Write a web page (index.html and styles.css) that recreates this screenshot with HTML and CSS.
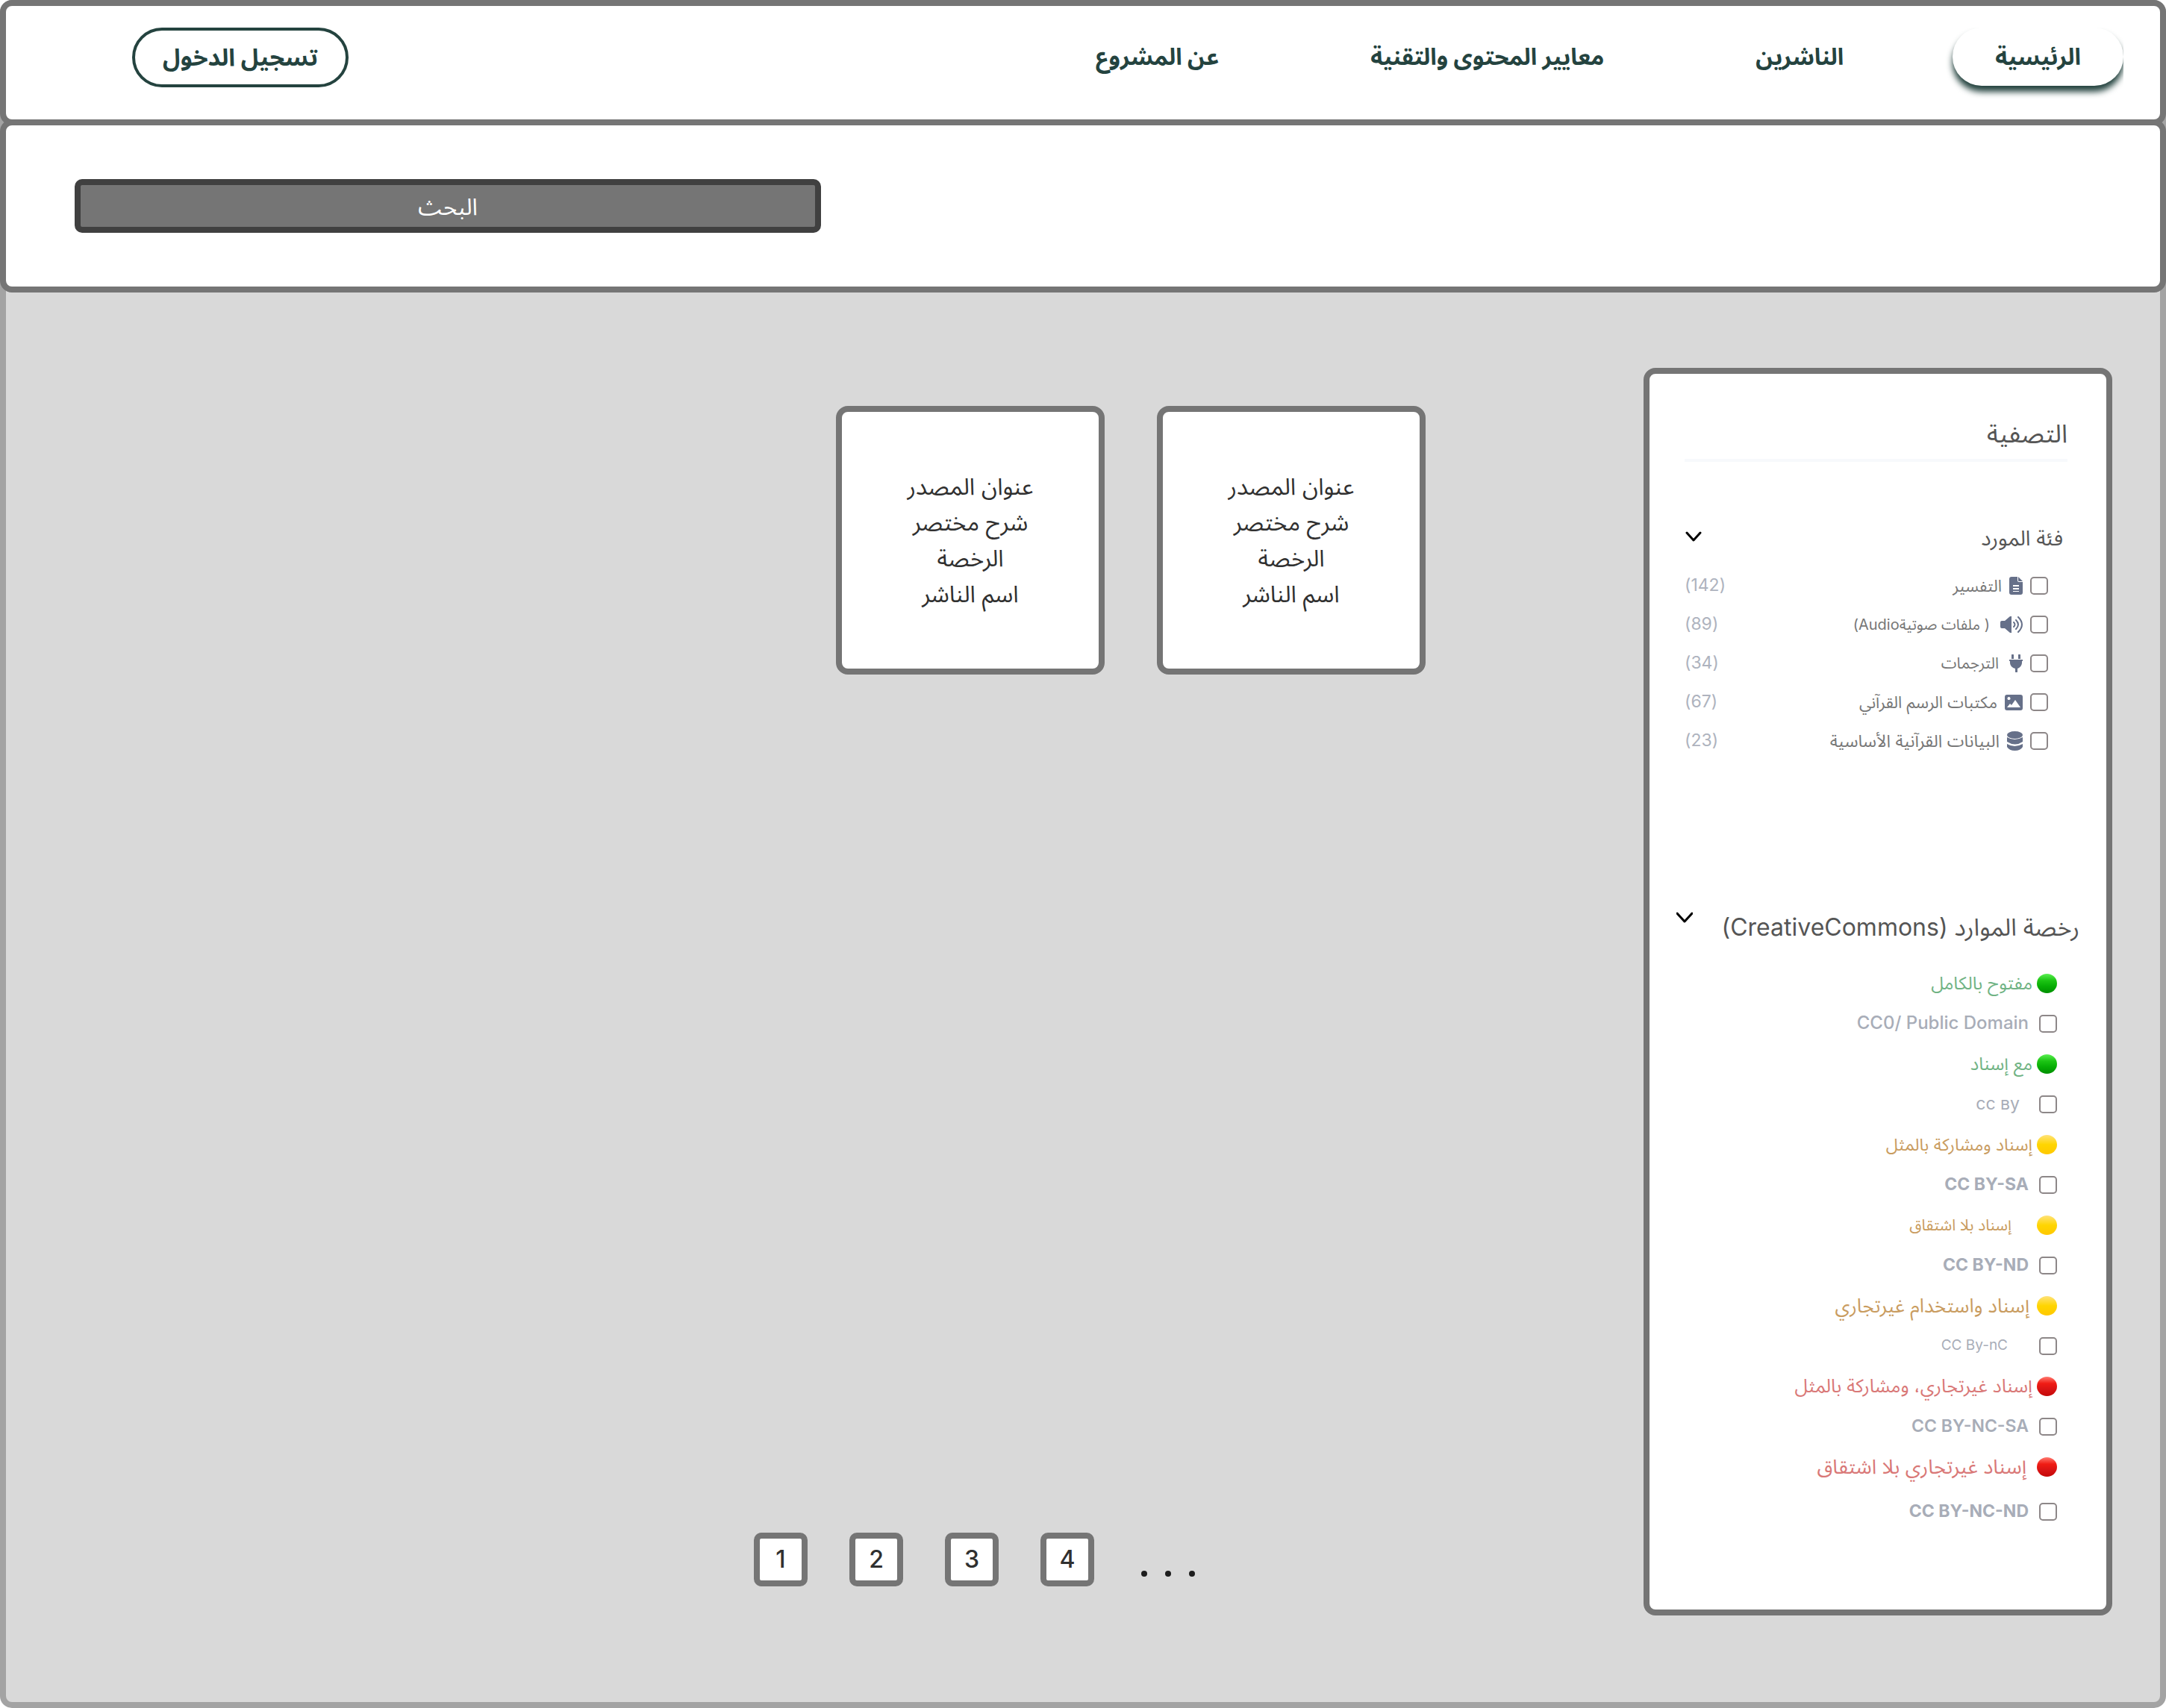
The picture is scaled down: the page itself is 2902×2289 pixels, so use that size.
FILE: index.html
```html
<!DOCTYPE html>
<html lang="ar" dir="rtl">
<head>
<meta charset="utf-8">
<meta name="viewport" content="width=device-width, initial-scale=1">
<title>الموارد</title>
<link rel="stylesheet" href="styles.css">
</head>
<body>
<div class="page">
  <header class="bar topbar">
    <nav class="nav">
      <a class="nav-link active" href="#">الرئيسية</a>
      <a class="nav-link" href="#">الناشرين</a>
      <a class="nav-link" href="#">معايير المحتوى والتقنية</a>
      <a class="nav-link" href="#">عن المشروع</a>
    </nav>
    <button class="login" type="button">تسجيل الدخول</button>
  </header>

  <form class="bar searchbar" role="search">
    <input class="search" type="search" placeholder="البحث" aria-label="البحث">
  </form>

  <main class="main">
    <aside class="filters">
      <h2 class="filters-title">التصفية</h2>

      <section class="group">
        <div class="group-head">
          <h3>فئة المورد</h3>
          <button class="toggle" type="button" aria-label="طي فئة المورد"><svg width="22" height="16" viewBox="0 0 22 16"><path d="M2 3l9 10 9-10"/></svg></button>
        </div>
        <ul class="categories">
          <li>
            <label><input type="checkbox"><svg class="icon" width="18" height="24" viewBox="0 0 18 24"><path fill-rule="evenodd" d="M3 0h8v5a2 2 0 0 0 2 2h5v14a3 3 0 0 1-3 3H3a3 3 0 0 1-3-3V3a3 3 0 0 1 3-3zm2 11v2h8v-2zm0 4v2h8v-2zm0 4v1h8v-1z"/><path d="M12 0l6 6h-5a1 1 0 0 1-1-1z"/></svg><span>التفسير</span></label>
            <span class="count">(142)</span>
          </li>
          <li class="spaced compact">
            <label><input type="checkbox"><svg class="icon" width="30" height="22" viewBox="0 0 30 22"><path d="M2 6h4l7-6a1 1 0 0 1 2 1v20a1 1 0 0 1-2 1l-7-6H2a2 2 0 0 1-2-2V8a2 2 0 0 1 2-2z"/><path class="wave" d="M18 8q3 3 0 6M21 5q6 6 0 12M24 1q10 10 0 20"/></svg><span>( ملفات صوتيةAudio)</span></label>
            <span class="count">(89)</span>
          </li>
          <li class="spaced">
            <label><input type="checkbox"><svg class="icon" width="18" height="24" viewBox="0 0 18 24"><path d="M3 1a1 1 0 0 1 3 0v5H3zM12 1a1 1 0 0 1 3 0v5h-3zM0 7h18v2h-1v2c0 4-3 7-6 8v4a1 1 0 0 1-3 0v-4c-4-1-7-4-7-8V9H0z"/></svg><span>الترجمات</span></label>
            <span class="count">(34)</span>
          </li>
          <li>
            <label><input type="checkbox"><svg class="icon" width="24" height="21" viewBox="0 0 24 21"><path fill-rule="evenodd" d="M3 0h18a3 3 0 0 1 3 3v15a3 3 0 0 1-3 3H3a3 3 0 0 1-3-3V3a3 3 0 0 1 3-3zm2 3a2 2 0 1 0 1 4 2 2 0 0 0-1-4zM3 17h18l-7-10-5 7-2-2z"/></svg><span>مكتبات الرسم القرآني</span></label>
            <span class="count">(67)</span>
          </li>
          <li class="roomy">
            <label><input type="checkbox"><svg class="icon" width="21" height="26" viewBox="0 0 21 26"><ellipse cx="10.5" cy="5" rx="10.5" ry="5"/><path d="M0 8q10 6 21 0v6q-10 7-21 0zM0 17q10 6 21 0v4q-3 5-10.500 5T0 21z"/></svg><span>البيانات القرآنية الأساسية</span></label>
            <span class="count">(23)</span>
          </li>
        </ul>
      </section>

      <section class="group licenses-group">
        <div class="group-head">
          <h3>رخصة الموارد (CreativeCommons)</h3>
          <button class="toggle" type="button" aria-label="طي رخصة الموارد"><svg width="22" height="16" viewBox="0 0 22 16"><path d="M1 2l10 11 10-11"/></svg></button>
        </div>
        <ul class="licenses">
          <li class="kind green"><i class="dot"></i><span>مفتوح بالكامل</span></li>
          <li><label><input type="checkbox"><span class="code medium">CC0/ Public Domain</span></label></li>
          <li class="kind green"><i class="dot"></i><span>مع إسناد</span></li>
          <li class="wide"><label><input type="checkbox"><span class="code">cc ʙy</span></label></li>
          <li class="kind yellow compact"><i class="dot"></i><span>إسناد ومشاركة بالمثل</span></li>
          <li><label><input type="checkbox"><span class="code bold">CC BY-SA</span></label></li>
          <li class="kind yellow wide small"><i class="dot"></i><span>إسناد بلا اشتقاق</span></li>
          <li><label><input type="checkbox"><span class="code bold">CC BY-ND</span></label></li>
          <li class="kind yellow large"><i class="dot"></i><span>إسناد واستخدام غيرتجاري</span></li>
          <li class="wide small"><label><input type="checkbox"><span class="code">CC By-nC</span></label></li>
          <li class="kind red roomy"><i class="dot"></i><span>إسناد غيرتجاري، ومشاركة بالمثل</span></li>
          <li><label><input type="checkbox"><span class="code semibold">CC BY-NC-SA</span></label></li>
          <li class="kind red xlarge"><i class="dot"></i><span>إسناد غيرتجاري بلا اشتقاق</span></li>
          <li><label><input type="checkbox"><span class="code bold">CC BY-NC-ND</span></label></li>
        </ul>
      </section>
    </aside>

    <div class="results">
      <div class="cards">
        <article class="card"><p>عنوان المصدر</p><p>شرح مختصر</p><p>الرخصة</p><p>اسم الناشر</p></article>
        <article class="card"><p>عنوان المصدر</p><p>شرح مختصر</p><p>الرخصة</p><p>اسم الناشر</p></article>
      </div>
      <nav class="pages" aria-label="الصفحات">
        <a href="#">1</a><a href="#">2</a><a href="#">3</a><a href="#">4</a>
        <span class="more" role="img" aria-label="المزيد"><i></i><i></i><i></i></span>
      </nav>
    </div>
  </main>
</div>
</body>
</html>
```
FILE: styles.css
```css
* { box-sizing: border-box; margin: 0; padding: 0; }

body {
  font-family: Inter, "Noto Sans Arabic", sans-serif;
  color: #303030;
  background: #fff;
}

a { color: inherit; text-decoration: none; }
ul { list-style: none; }
button, input { font: inherit; color: inherit; }

.page {
  display: flex;
  flex-direction: column;
  min-height: 100vh;
  border: 8px solid #a3a3a3;
  border-radius: 16px;
  background: #d9d9d9;
}

/* Top bars sit over the page frame and share one edge */
.bar {
  margin: -8px -8px 0;
  border: 8px solid #757575;
  border-radius: 16px;
  background: #fff;
}

.topbar {
  display: flex;
  justify-content: space-between;
  align-items: flex-start;
  height: 168px;
  padding: 29px 49px 0 169px;
}

.nav { display: flex; gap: 89px; }

.nav-link {
  padding: 0 57px;
  border-radius: 40px;
  font-size: 31px;
  font-weight: 700;
  line-height: 78px;
  color: #24433f;
}

.nav-link.active {
  background: #fff;
  box-shadow: 0 8px 8px #24433f;
  clip-path: inset(0 0 -20px -12px);
}

.login {
  width: 290px;
  height: 80px;
  border: 4px solid #24433f;
  border-radius: 40px;
  background: #fff;
  font-size: 32px;
  font-weight: 700;
  line-height: 70px;
  color: #24433f;
}

.searchbar {
  display: flex;
  justify-content: flex-end;
  height: 232px;
  padding: 72px 92px;
}

.search {
  appearance: none;
  width: 1000px;
  height: 72px;
  border: 8px solid #404040;
  border-radius: 10px;
  background: #757575;
  font-size: 31px;
  text-align: center;
  color: #fff;
}
.search::placeholder { color: #fff; opacity: 1; }
.search::-webkit-search-cancel-button { display: none; }

.main {
  flex: 1;
  display: flex;
  align-items: flex-start;
  padding: 101px 64px 116px;
}

/* Filter panel */
.filters {
  flex: none;
  width: 628px;
  padding-bottom: 98px;
  border: 8px solid #757575;
  border-radius: 16px;
  background: #fff;
}

.filters-title {
  margin: 50px 52px 0 47px;
  height: 68px;
  border-bottom: 4px solid #f7f9fc;
  font-size: 34px;
  font-weight: 400;
  line-height: 60px;
  color: #555;
}

.group { margin-top: 76px; }

.group-head {
  display: flex;
  justify-content: space-between;
  align-items: flex-start;
  height: 52px;
  padding: 0 58px 0 48px;
}

.group-head h3 {
  font-size: 28px;
  font-weight: 400;
  line-height: 52px;
  color: #555;
}

.toggle { display: flex; padding-top: 16px; border: 0; background: none; }
.toggle svg { fill: none; stroke: #000; stroke-width: 3; stroke-linecap: round; stroke-linejoin: round; }

.categories { margin-top: 12px; padding: 0 78px 0 47px; }

.categories li {
  display: flex;
  justify-content: space-between;
  align-items: center;
  height: 52px;
}

label { display: flex; align-items: center; gap: 10px; }

input[type="checkbox"] {
  appearance: none;
  width: 24px;
  height: 24px;
  border: 2px solid #8d8788;
  border-radius: 5px;
  background: #fff;
}

.icon { fill: #667089; }
.wave { fill: none; stroke: #667089; stroke-width: 2; stroke-linecap: round; }

.categories label span { font-size: 22px; line-height: 52px; color: #777; }
.categories .spaced label span { padding-right: 4px; font-size: 21px; }
.categories .compact label span { font-size: 20px; }
.categories .roomy label span { font-size: 23px; }
.count { padding-bottom: 2px; font-size: 23px; color: #aeb3be; }

.licenses-group { margin-top: 198px; }
.licenses-group .group-head { padding: 0 36px 0 36px; }
.licenses-group .group-head h3 { font-size: 32px; }
.licenses-group .toggle { padding-top: 5px; }

.licenses { margin-top: 22px; padding: 0 66px; }

.licenses li, .licenses label { display: flex; align-items: center; height: 54px; }
.licenses li:last-child { height: 66px; }
.licenses label { gap: 14px; }

.kind { gap: 6px; font-size: 24px; }
.kind.small { font-size: 21px; }
.kind.compact { font-size: 23px; }
.kind.roomy { font-size: 25px; }
.kind.large { gap: 10px; font-size: 26px; }
.kind.xlarge { gap: 14px; font-size: 27px; }
.kind.wide { gap: 34px; }
.licenses .wide label { gap: 26px; }
.licenses .wide.small label { gap: 42px; }

.green { color: #70b384; }
.yellow { color: #c99c60; }
.red { color: #d97877; }

.dot { width: 27px; height: 26px; border-radius: 50%; }
.green .dot { background: linear-gradient(#5bf052, #1cc414 35%, #07ad05 65%, #008f00); }
.yellow .dot { background: linear-gradient(#ffe27a, #ffd500 50%, #ffc800); }
.red .dot { background: linear-gradient(#ff7a70, #f01c14 35%, #d91414 65%, #c40808); }

.code { padding-bottom: 3px; font-size: 23px; color: #a8adb8; direction: ltr; }
.code.medium { font-size: 24px; font-weight: 500; }
.code.semibold { font-weight: 600; }
.code.bold { font-weight: 700; }
.small .code { font-size: 19px; }

/* Results */
.results {
  flex: 1;
  align-self: stretch;
  display: flex;
  flex-direction: column;
  justify-content: space-between;
  align-items: flex-start;
  padding: 51px 292px 39px 0;
}

.cards { display: flex; flex-wrap: wrap; gap: 70px; }

.card {
  display: flex;
  flex-direction: column;
  justify-content: center;
  width: 360px;
  height: 360px;
  border: 8px solid #757575;
  border-radius: 16px;
  background: #fff;
  text-align: center;
  font-size: 31px;
  line-height: 48px;
}

.pages {
  display: flex;
  gap: 56px;
  direction: ltr;
  margin-right: 309px;
}

.pages a {
  width: 72px;
  height: 72px;
  border: 8px solid #757575;
  border-radius: 10px;
  background: #fff;
  font-size: 32px;
  font-weight: 500;
  line-height: 56px;
  text-align: center;
}

.more { display: flex; gap: 24px; padding: 51px 0 0 7px; }
.more i { width: 8px; height: 8px; border-radius: 50%; background: #1e1e1e; }
```
